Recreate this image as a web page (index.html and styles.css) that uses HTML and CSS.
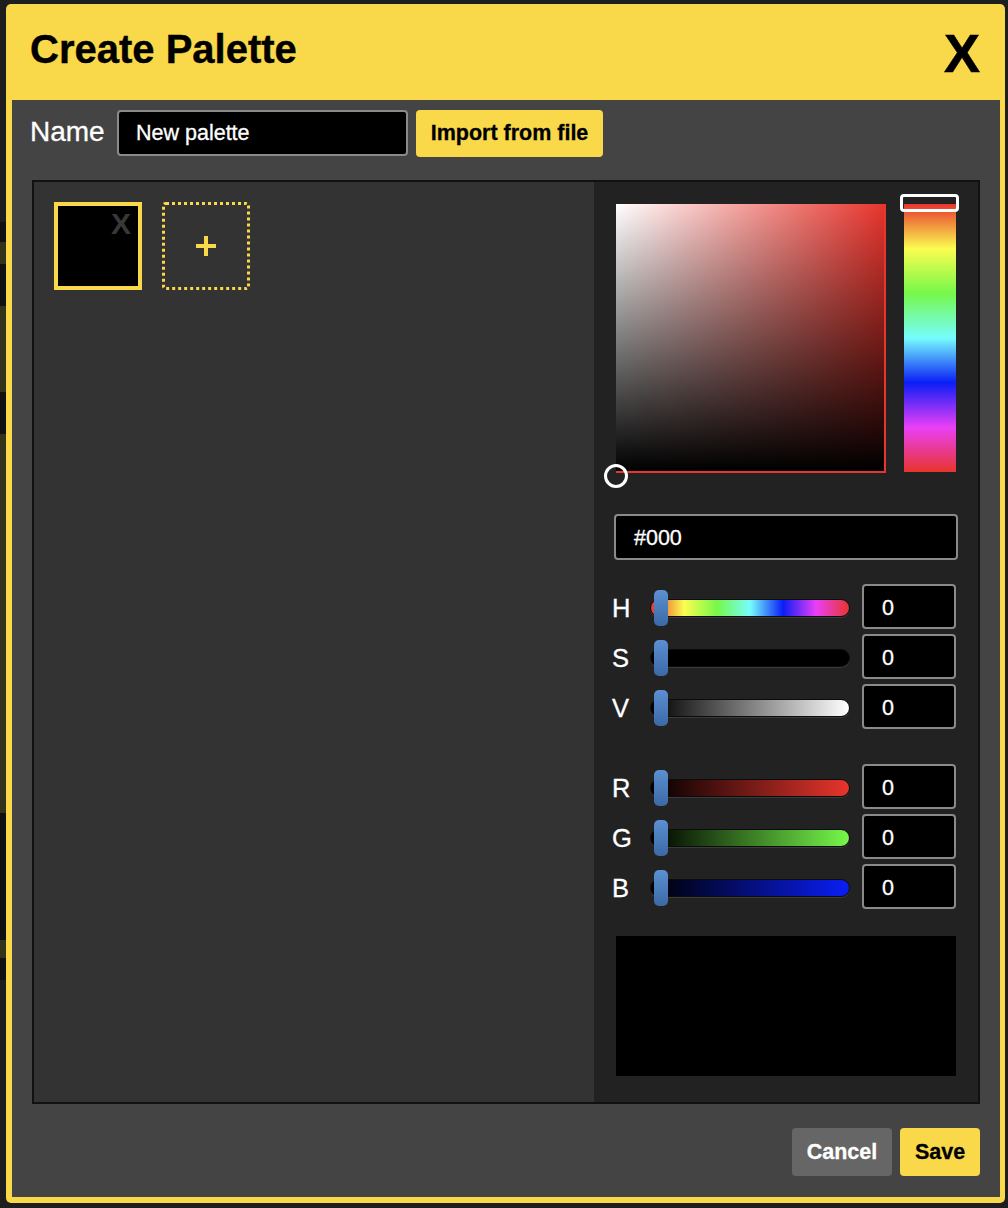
FILE: index.html
```html
<!DOCTYPE html>
<html lang="en">
<head>
<meta charset="utf-8">
<title>Create Palette</title>
<link rel="stylesheet" href="styles.css">
</head>
<body>
<div class="dialog">
  <div class="dialog-header">
    <h1 class="dialog-title">Create Palette</h1>
    <span class="dialog-close">X</span>
  </div>
  <div class="dialog-body">
    <div class="name-row">
      <label class="name-label">Name</label>
      <div class="text-input name-input">New palette</div>
      <button class="btn btn-yellow import-btn">Import from file</button>
    </div>
    <div class="editor">
      <div class="swatches">
        <div class="swatch"><span class="swatch-x">X</span></div>
        <div class="swatch-add">
          <svg width="20" height="20" viewBox="0 0 20 20"><rect x="0" y="8" width="20" height="4" fill="#f9d849"/><rect x="8" y="0" width="4" height="20" fill="#f9d849"/></svg>
        </div>
      </div>
      <div class="picker">
        <div class="picker-top">
          <div class="sv-box"><span class="sv-handle"></span></div>
          <div class="hue-bar"><span class="hue-handle"></span></div>
        </div>
        <div class="text-input hex-input">#000</div>
        <div class="slider-group">
          <div class="slider-row"><span class="slider-label">H</span><div class="track track-h"><span class="thumb"></span></div><div class="value-box">0</div></div>
          <div class="slider-row"><span class="slider-label">S</span><div class="track track-s"><span class="thumb"></span></div><div class="value-box">0</div></div>
          <div class="slider-row"><span class="slider-label">V</span><div class="track track-v"><span class="thumb"></span></div><div class="value-box">0</div></div>
        </div>
        <div class="slider-group rgb-group">
          <div class="slider-row"><span class="slider-label">R</span><div class="track track-r"><span class="thumb"></span></div><div class="value-box">0</div></div>
          <div class="slider-row"><span class="slider-label">G</span><div class="track track-g"><span class="thumb"></span></div><div class="value-box">0</div></div>
          <div class="slider-row"><span class="slider-label">B</span><div class="track track-b"><span class="thumb"></span></div><div class="value-box">0</div></div>
        </div>
        <div class="preview"></div>
      </div>
    </div>
    <div class="footer">
      <button class="btn btn-gray">Cancel</button>
      <button class="btn btn-yellow save-btn">Save</button>
    </div>
  </div>
</div>
</body>
</html>
```
FILE: styles.css
```css
* { box-sizing: border-box; }

html, body { height: 100%; }

body {
  margin: 0;
  font-family: "Liberation Sans", Arial, sans-serif;
  background:
    linear-gradient(to bottom,
      #1e1e1e 0 222px, #111 222px 242px, #33331b 242px 264px,
      #111 264px 306px, #33331b 306px 392px, #111 392px 434px,
      #33331b 434px 813px, #111 813px 940px, #33331b 940px 958px,
      #111 958px 980px, #1e1e1e 980px) 0 0 / 6px 1208px no-repeat,
    #1e1e1e;
  overflow: hidden;
}

.dialog {
  margin: 4px 0 0 6px;
  width: 999px;
  height: 1199px;
  background: #f9d849;
  border-radius: 5px;
  padding: 0 5px 6px 6px;
  display: flex;
  flex-direction: column;
}

.dialog-header {
  height: 96px;
  flex: none;
  display: flex;
  justify-content: space-between;
  align-items: flex-start;
  padding: 0 20px 0 18px;
}

.dialog-title {
  margin: 25px 0 0;
  font-size: 40px;
  line-height: 40px;
  font-weight: 700;
  color: #000;
  -webkit-text-stroke: 0.4px #000;
}

.dialog-close {
  margin-top: 22px;
  font-size: 54px;
  line-height: 54px;
  font-weight: 700;
  color: #000;
  -webkit-text-stroke: 0.6px #000;
}

.dialog-body {
  flex: 1;
  background: #444;
  padding: 10px 20px 21px 20px;
  display: flex;
  flex-direction: column;
}

.name-row {
  display: flex;
  align-items: center;
  height: 47px;
}

.name-label {
  width: 87px;
  margin-left: -2px;
  margin-bottom: 4px;
  font-size: 28px;
  color: #fff;
  -webkit-text-stroke: 0.3px #fff;
}

.text-input {
  background: #000;
  border: 2px solid #8a8a8a;
  border-radius: 4px;
  color: #fff;
  font-size: 21.5px;
  display: flex;
  align-items: center;
  -webkit-text-stroke: 0.3px #fff;
}

.name-input {
  width: 291px;
  height: 46px;
  padding-left: 17px;
  margin-top: -1px;
}

.btn {
  border: none;
  border-radius: 4px;
  font-family: "Liberation Sans", Arial, sans-serif;
  font-weight: 700;
  font-size: 21.5px;
  height: 48px;
  padding: 0;
  cursor: pointer;
}

.btn-yellow { background: #f9d849; color: #000; -webkit-text-stroke: 0.3px #000; }
.btn-gray { background: #666; color: #fff; width: 100px; -webkit-text-stroke: 0.3px #fff; }

.import-btn {
  margin-left: 8px;
  width: 187px;
  height: 47px;
}

.editor {
  margin-top: 23px;
  height: 924px;
  border: 2px solid #111;
  display: flex;
}

.swatches {
  flex: 1;
  background: #333;
  padding: 20px;
  display: flex;
  align-items: flex-start;
  gap: 20px;
}

.swatch {
  width: 88px;
  height: 88px;
  border: 4px solid #f9d849;
  background: #000;
  position: relative;
}

.swatch-x {
  position: absolute;
  top: 3px;
  right: 7px;
  font-size: 30px;
  line-height: 30px;
  font-weight: 700;
  color: #383838;
}

.swatch-add {
  width: 88px;
  height: 88px;
  border: 3px dotted #f9d849;
  border-radius: 4px;
  display: flex;
  align-items: center;
  justify-content: center;
}

.picker {
  width: 384px;
  background: #222;
  padding: 22px;
  display: flex;
  flex-direction: column;
}

.picker-top {
  display: flex;
  gap: 18px;
  align-items: flex-start;
}

.sv-box {
  width: 270px;
  height: 269px;
  position: relative;
  border-right: 2px solid #e8352d;
  border-bottom: 2px solid #e8352d;
  background:
    linear-gradient(to bottom, rgba(0,0,0,0), #000),
    linear-gradient(to right, #fff, #e8352d);
}

.sv-handle {
  position: absolute;
  left: -12px;
  top: 260px;
  width: 24px;
  height: 24px;
  border: 3.5px solid #fff;
  border-radius: 50%;
}

.hue-bar {
  width: 52px;
  height: 268px;
  position: relative;
  background: linear-gradient(to bottom,
    #e8352d 0%, #fbfd50 16.67%, #76f84a 33.33%, #76fdfd 50%,
    #0a1ef5 66.67%, #ea3ff7 83.33%, #e8352d 100%);
}

.hue-handle {
  position: absolute;
  left: -4px;
  top: -10px;
  width: 59px;
  height: 18px;
  border: 3px solid #fff;
  border-radius: 4px;
}

.hex-input {
  margin: 41px -2px 0;
  height: 46px;
  padding: 2px 0 0 18px;
}

.slider-group {
  margin: 24px 0 0 -2px;
  display: flex;
  flex-direction: column;
  gap: 5px;
}

.rgb-group { margin-top: 35px; }

.slider-row {
  display: grid;
  grid-template-columns: 24px 200px 94px;
  column-gap: 12px;
  align-items: center;
  height: 45px;
}

.slider-label {
  margin-left: -2px;
  padding-top: 4px;
  font-size: 25.5px;
  color: #fff;
  -webkit-text-stroke: 0.3px #fff;
}

.track {
  position: relative;
  height: 18px;
  margin-top: 3px;
  border-radius: 9px;
  border: 1px solid #0c0c0c;
  box-shadow: 0 1px 0 #3a3a3a;
}

.track-h {
  background: linear-gradient(to right,
    #e8352d 0%, #fbfd50 16.67%, #76f84a 33.33%, #76fdfd 50%,
    #0a1ef5 66.67%, #ea3ff7 83.33%, #e8352d 100%);
}
.track-s { background: #000; }
.track-v { background: linear-gradient(to right, #000, #fff); }
.track-r { background: linear-gradient(to right, #000, #e8352d); }
.track-g { background: linear-gradient(to right, #000, #76f84a); }
.track-b { background: linear-gradient(to right, #000, #0a1ef5); }

.thumb {
  position: absolute;
  left: 3px;
  top: -10px;
  width: 14px;
  height: 36px;
  border-radius: 5px;
  background: linear-gradient(to bottom, #5b90d2, #3c69a6);
}

.value-box {
  height: 45px;
  background: #000;
  border: 2px solid #8a8a8a;
  border-radius: 4px;
  color: #fff;
  font-size: 21.5px;
  display: flex;
  align-items: center;
  padding: 4px 0 0 18px;
  -webkit-text-stroke: 0.3px #fff;
}

.preview {
  margin-top: 27px;
  height: 140px;
  background: #000;
}

.footer {
  margin-top: 24px;
  display: flex;
  justify-content: flex-end;
  gap: 8px;
}

.save-btn { width: 80px; }
```
